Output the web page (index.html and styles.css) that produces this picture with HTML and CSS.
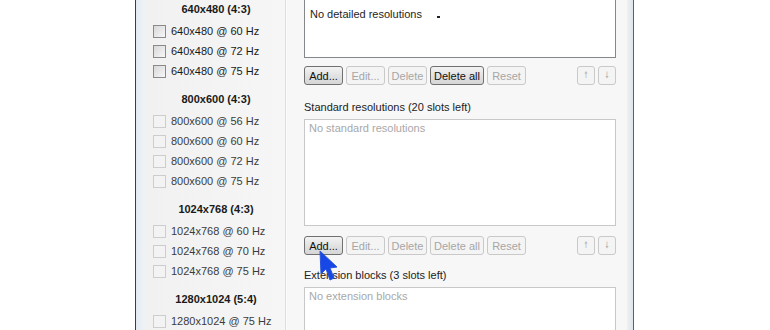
FILE: index.html
```html
<!DOCTYPE html>
<html lang="en">
<head>
  <meta charset="UTF-8" />
  <title>Detailed resolutions</title>
  <link rel="stylesheet" href="styles.css">
</head>
<body>
  <div class="screen">
    <div class="outside"></div>
    <div class="window">
      <div class="frame-left"></div>

      <div class="modes">
        <div class="group">
          <div class="group-title">640x480 (4:3)</div>
          <label class="mode"><span class="box"></span>640x480 @ 60 Hz</label>
          <label class="mode"><span class="box"></span>640x480 @ 72 Hz</label>
          <label class="mode"><span class="box"></span>640x480 @ 75 Hz</label>
        </div>
        <div class="group off">
          <div class="group-title">800x600 (4:3)</div>
          <label class="mode"><span class="box"></span>800x600 @ 56 Hz</label>
          <label class="mode"><span class="box"></span>800x600 @ 60 Hz</label>
          <label class="mode"><span class="box"></span>800x600 @ 72 Hz</label>
          <label class="mode"><span class="box"></span>800x600 @ 75 Hz</label>
        </div>
        <div class="group off">
          <div class="group-title">1024x768 (4:3)</div>
          <label class="mode"><span class="box"></span>1024x768 @ 60 Hz</label>
          <label class="mode"><span class="box"></span>1024x768 @ 70 Hz</label>
          <label class="mode"><span class="box"></span>1024x768 @ 75 Hz</label>
        </div>
        <div class="group off">
          <div class="group-title">1280x1024 (5:4)</div>
          <label class="mode"><span class="box"></span>1280x1024 @ 75 Hz</label>
        </div>
      </div>

      <div class="editor">
        <div class="list first">
          <span class="item">No detailed resolutions</span>
          <span class="speck"></span>
        </div>
        <div class="buttons">
          <button class="btn w39">Add...</button>
          <button class="btn w39" disabled>Edit...</button>
          <button class="btn w39" disabled>Delete</button>
          <button class="btn w53">Delete all</button>
          <button class="btn w39" disabled>Reset</button>
          <span class="fill"></span>
          <button class="btn arrow" disabled>&#129045;</button>
          <button class="btn arrow" disabled>&#129047;</button>
        </div>

        <div class="caption">Standard resolutions (20 slots left)</div>
        <div class="list off std">
          <span class="item">No standard resolutions</span>
        </div>
        <div class="buttons second">
          <button class="btn w39">Add...</button>
          <button class="btn w39" disabled>Edit...</button>
          <button class="btn w39" disabled>Delete</button>
          <button class="btn w53" disabled>Delete all</button>
          <button class="btn w39" disabled>Reset</button>
          <span class="fill"></span>
          <button class="btn arrow" disabled>&#129045;</button>
          <button class="btn arrow" disabled>&#129047;</button>
        </div>

        <div class="caption ext-caption">Extension blocks (3 slots left)</div>
        <div class="list off ext">
          <span class="item">No extension blocks</span>
        </div>
      </div>

      <div class="frame-right"></div>
    </div>
  </div>

  <svg class="cursor" width="20" height="34" viewBox="0 0 20 34">
    <polygon points="1,1 2,24 7,19 11,30 15,28 11,18 18,17" fill="#1747e6" stroke="#2a55d8" stroke-width="1" stroke-linejoin="round"/>
  </svg>
</body>
</html>
```

FILE: styles.css
```css
body {
  margin: 0;
  background: #ffffff;
  font-family: "Liberation Sans", Arial, sans-serif;
  font-size: 11px;
  color: #1e1e1e;
}
.screen {
  display: flex;
  width: 770px;
  height: 330px;
  overflow: hidden;
}
.outside {
  width: 135px;
  flex: none;
}
.window {
  display: flex;
  width: 497px;
  flex: none;
  border-left: 1px solid #33404b;
  border-right: 1px solid #55636f;
  background: #f4f4f4;
}
.frame-left {
  width: 9px;
  flex: none;
  background: linear-gradient(to right, #e3eaf1, #f0f3f6);
}
.frame-right {
  width: 6px;
  flex: none;
  background: linear-gradient(to right, #eef1f4, #dfe5eb);
}

/* mode checklist */
.modes {
  width: 140px;
  flex: none;
  background: linear-gradient(to right, #f1f1f1, #f6f6f6);
  border-right: 1px solid #dedede;
}
.group {
  margin-bottom: 10px;
}
.group-title {
  height: 20px;
  line-height: 19px;
  text-align: center;
  font-weight: bold;
  font-size: 11px;
  color: #1a1a1a;
  padding-left: 2px;
}
.mode {
  display: flex;
  align-items: center;
  box-sizing: border-box;
  height: 20px;
  padding: 2px 0 0 8px;
  font-size: 11px;
  color: #1a1a1a;
}
.box {
  width: 11px;
  height: 11px;
  margin-right: 5px;
  border: 1px solid #8a8a8a;
  background: linear-gradient(135deg, #d8d8d8, #f7f7f7);
}
.group.off .mode {
  color: #3c3c3c;
}
.group.off .box {
  border-color: #cdcdcd;
  background: #f3f3f3;
}

/* resolution editor */
.editor {
  flex: 1;
  padding: 0 11px 0 17px;
  background: #f7f7f7;
  border-left: 1px solid #fbfbfb;
}
.list {
  position: relative;
  background: #ffffff;
  border: 1px solid #84888b;
  padding: 7px 5px;
}
.list.first {
  margin-top: -20px;
  box-sizing: border-box;
  height: 78px;
  padding-top: 27px;
}
.list.off {
  border-color: #c8c8c8;
  color: #a8a8a8;
  padding: 2px 4px;
}
.list.std {
  height: 101px;
}
.list.ext {
  height: 60px;
}
.speck {
  position: absolute;
  left: 132px;
  top: 35px;
  width: 3px;
  height: 2px;
  background: #222;
}
.buttons {
  display: flex;
  align-items: center;
  gap: 3px;
  margin-top: 8px;
  height: 19px;
}
.buttons.second {
  margin-top: 10px;
}
.fill {
  flex: 1;
}
.btn {
  height: 19px;
  padding: 0;
  font-family: "Liberation Sans", Arial, sans-serif;
  font-size: 11px;
  color: #111;
  border: 1px solid #707070;
  border-radius: 3px;
  background: linear-gradient(#f3f3f3, #e2e2e2 50%, #d6d6d6);
}
.btn:disabled {
  color: #a6a6a6;
  border-color: #c9c9c9;
  background: #f4f4f4;
}
.w39 { width: 39px; }
.w53 { width: 54px; }
.btn.arrow {
  width: 18px;
  font-size: 9px;
  color: #b9b9b9;
}
.caption {
  margin-top: 16px;
  height: 18px;
  line-height: 13px;
  font-size: 11px;
  color: #222;
}
.caption.ext-caption {
  margin-top: 14px;
}

.cursor {
  position: absolute;
  left: 319px;
  top: 250px;
}
```
